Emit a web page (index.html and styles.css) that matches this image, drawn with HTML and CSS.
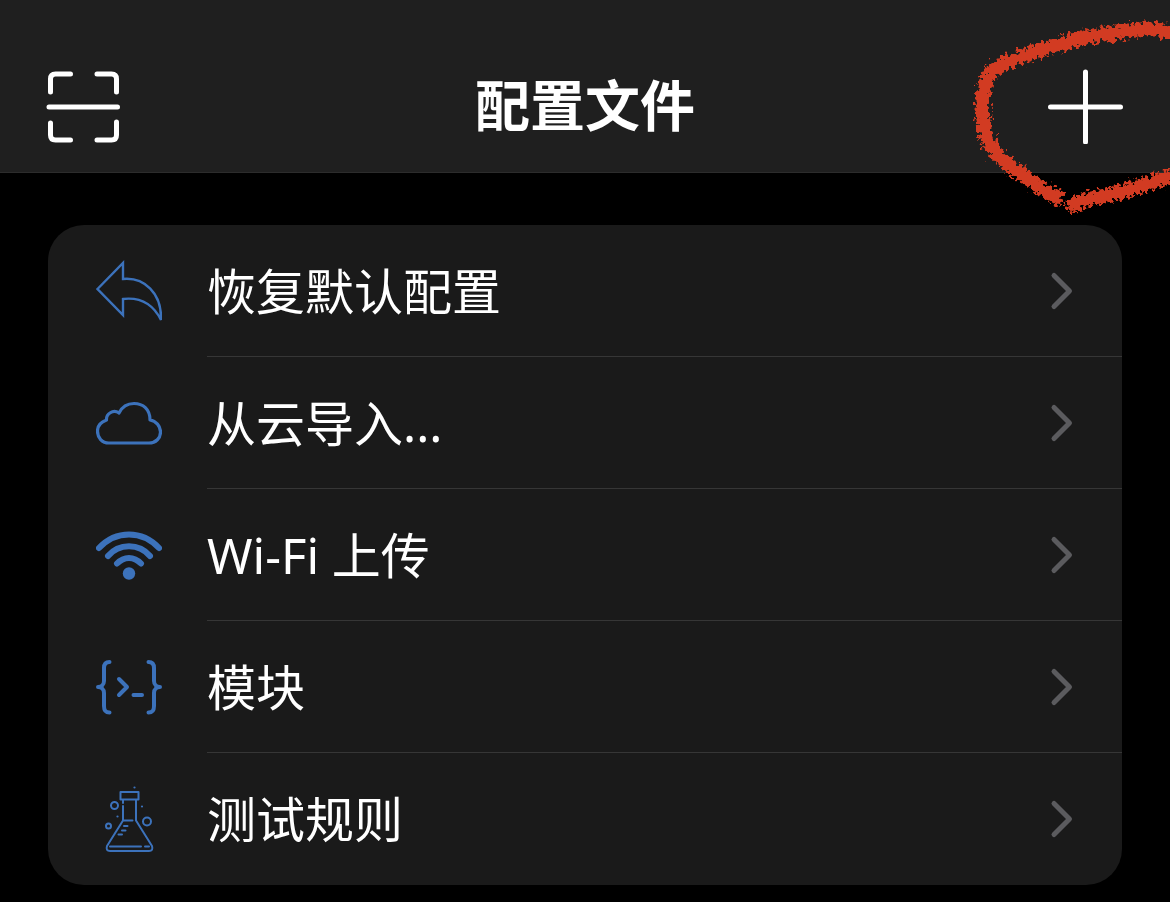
FILE: index.html
```html
<!DOCTYPE html>
<html lang="zh-CN">
<head>
<meta charset="utf-8">
<meta name="viewport" content="width=device-width, initial-scale=1">
<title>配置文件</title>
<link rel="stylesheet" href="styles.css">
</head>
<body>
<header class="navbar">
  <button class="nav-button" type="button" aria-label="扫描">
    <svg width="76" height="76" viewBox="0 0 76 76" fill="none" stroke="#fff" stroke-width="5" stroke-linecap="round" stroke-linejoin="round">
      <path d="M4.500 24V11q0-5 5-5h15M51 6H65.500q5 0 5 5v13M4.500 55V67q0 5 5 5h15M51 72H65.500q5 0 5-5V54M3 39h68.500"/>
    </svg>
  </button>
  <h1 class="navbar-title">配置文件</h1>
  <button class="nav-button" type="button" aria-label="添加">
    <svg width="76" height="76" viewBox="0 0 76 76" fill="none" stroke="#fff" stroke-width="5" stroke-linecap="round">
      <path d="M37.500 4v70M2.500 39h70"/>
    </svg>
  </button>
</header>

<svg class="marker" width="210" height="225" viewBox="0 0 210 225" fill="none" aria-hidden="true">
  <defs>
    <filter id="chalk" x="-10%" y="-10%" width="120%" height="120%">
      <feTurbulence type="fractalNoise" baseFrequency="0.25" numOctaves="3" seed="8" result="noise"/>
      <feDisplacementMap in="SourceGraphic" in2="noise" scale="15" xChannelSelector="R" yChannelSelector="G"/>
      <feGaussianBlur stdDeviation="0.5"/>
    </filter>
  </defs>
  <g filter="url(#chalk)" stroke="#d23b20" stroke-width="14" stroke-linecap="butt" stroke-linejoin="round">
    <path d="M220 36C204 28 185 28 164 31C146 36 137 34 121 38C101 44 81 49 62 57C47 62 34 67 28 77C21 90 22 108 24 126C26 140 34 153 45 162C59 173 82 191 102 200"/>
    <path d="M109 210C116 201 127 199 143 196C163 193 181 184 215 176"/>
  </g>
</svg>

<main class="content">
  <nav class="card" aria-label="配置文件">
    <a class="row" href="#restore">
      <svg class="row-icon" viewBox="0 0 66 66" fill="none" stroke="#3c72bb" stroke-width="2.400">
        <path d="M1.500 31L27 5V21C48 19 66 35 65 62C57 46 44 39 27 41V57Z"/>
      </svg>
      <span class="row-body"><span class="row-label">恢复默认配置</span>
      <svg class="chevron" viewBox="0 0 24 40"><path d="M4 4.500L19.500 20L4 35.500"/></svg></span>
    </a>
    <a class="row" href="#cloud">
      <svg class="row-icon" viewBox="0 0 66 66" fill="none" stroke="#3c72bb" stroke-width="3.200" stroke-linejoin="round">
        <path d="M13 53H53C60 53 64.500 48 64.500 42C64.500 36 60 31 54 30C54 19 47 13.500 38 13.500C30 13.500 26 17 23 23C17 19 10 24 10.500 30C5 32 1.500 36 1.500 41C1.500 48 6 53 13 53Z"/>
      </svg>
      <span class="row-body"><span class="row-label">从云导入...</span>
      <svg class="chevron" viewBox="0 0 24 40"><path d="M4 4.500L19.500 20L4 35.500"/></svg></span>
    </a>
    <a class="row" href="#wifi">
      <svg class="row-icon" viewBox="0 0 66 66" fill="none" stroke="#3c72bb" stroke-width="6" stroke-linecap="round">
        <path d="M3 26C20 8 46 8 63 26M12 34C23 21 43 21 54 34M21 41.500C28 34 38 34 45 41.500"/>
        <circle cx="33" cy="51.500" r="6.200" fill="#3c72bb" stroke="none"/>
      </svg>
      <span class="row-body"><span class="row-label">Wi-Fi 上传</span>
      <svg class="chevron" viewBox="0 0 24 40"><path d="M4 4.500L19.500 20L4 35.500"/></svg></span>
    </a>
    <a class="row" href="#modules">
      <svg class="row-icon" viewBox="0 0 66 66" fill="none" stroke="#3c72bb" stroke-width="4" stroke-linecap="round" stroke-linejoin="round">
        <path d="M13.500 8C9 8 8 11 8 14V27C8 31 5 33 2 33C5 33 8 35 8 39V52C8 56 9 58.500 13.500 58.500M52.500 8C57 8 58 11 58 14V27C58 31 61 33 64 33C61 33 58 35 58 39V52C58 56 57 58.500 52.500 58.500M23 25L31 33L23 41M37.500 41H46"/>
      </svg>
      <span class="row-body"><span class="row-label">模块</span>
      <svg class="chevron" viewBox="0 0 24 40"><path d="M4 4.500L19.500 20L4 35.500"/></svg></span>
    </a>
    <a class="row" href="#rules">
      <svg class="row-icon" viewBox="0 0 66 66" fill="none" stroke="#3c72bb" stroke-width="2" stroke-linecap="round" stroke-linejoin="round">
        <path d="M24.500 6H42.500V13.500H24.500ZM27 13.500V17M27 20V34.500L11 60Q9.500 65 14 65H53Q57.500 65 56 60L40 34.500V13.500M27 34.500H36.500M28 13.500H35.500M14 60.500H45M49 60.500H53M28 40H31.500M26 44.500H29.500M22.500 48.500H26"/>
        <circle cx="18.500" cy="19.500" r="3.500"/><circle cx="12.500" cy="40" r="2.500"/><circle cx="51" cy="35.500" r="4"/>
        <g fill="#3c72bb" stroke="none"><circle cx="38.500" cy="1.500" r="1.100"/><circle cx="46" cy="20.500" r="1.100"/><circle cx="21.500" cy="30.500" r="1.100"/></g>
      </svg>
      <span class="row-body"><span class="row-label">测试规则</span>
      <svg class="chevron" viewBox="0 0 24 40"><path d="M4 4.500L19.500 20L4 35.500"/></svg></span>
    </a>
  </nav>
</main>
</body>
</html>
```
FILE: styles.css
```css
* {
  box-sizing: border-box;
}

body {
  margin: 0;
  position: relative;
  min-height: 100vh;
  overflow-x: hidden;
  background: #000;
  color: #fff;
  font-family: "Noto Sans", "Noto Sans CJK SC", sans-serif;
}

.navbar {
  display: flex;
  align-items: center;
  justify-content: space-between;
  padding: 64px 46px 24px;
  background: #1f1f1f;
  border-bottom: 1px solid #2c2c2c;
}

.nav-button {
  display: flex;
  align-items: center;
  height: 84px;
  padding: 0;
  border: 0;
  background: none;
}

.navbar-title {
  margin: 0;
  font-family: Inter, "Noto Sans CJK SC", sans-serif;
  font-size: 55px;
  line-height: 82px;
  font-weight: 700;
}

.marker {
  position: absolute;
  top: 0;
  right: 0;
  pointer-events: none;
}

.content {
  padding: 52px 48px 17px;
}

.card {
  overflow: hidden;
  border-radius: 36px;
  background: #1a1a1a;
}

.row {
  display: flex;
  align-items: center;
  gap: 45px;
  padding-left: 48px;
  color: inherit;
  text-decoration: none;
}

.row-icon {
  flex: none;
  width: 66px;
  height: 66px;
}

.row-body {
  display: flex;
  flex: 1;
  align-items: center;
  justify-content: space-between;
  height: 132px;
  padding-right: 48px;
  border-bottom: 1px solid #363636;
}

.row:last-child .row-body {
  border-bottom: 0;
}

.row-label {
  font-size: 49px;
  line-height: 72px;
}

.chevron {
  width: 24px;
  height: 40px;
  fill: none;
  stroke: #5b5b5e;
  stroke-width: 5;
  stroke-linecap: round;
  stroke-linejoin: round;
}
```
